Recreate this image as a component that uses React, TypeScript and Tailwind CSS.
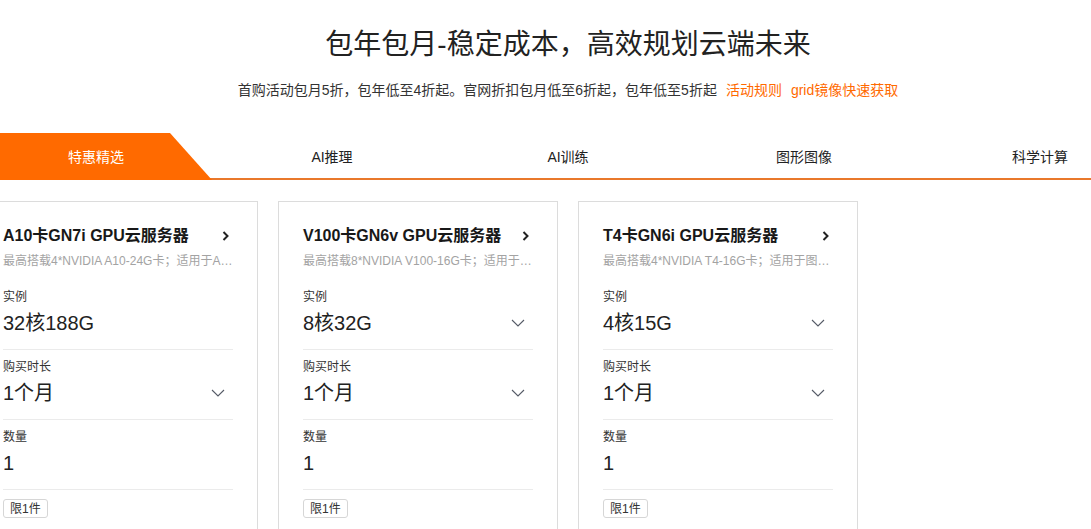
const font = { fontFamily: '"Liberation Sans", Arial, "Noto Sans CJK SC", sans-serif' };

type Product = {
    title: string;
    desc: string;
    instance: string;
    instanceSelect: boolean;
};

const products: Product[] = [
    { title: 'A10卡GN7i GPU云服务器', desc: '最高搭载4*NVIDIA A10-24G卡；适用于AI推理、图形渲染等场景', instance: '32核188G', instanceSelect: false },
    { title: 'V100卡GN6v GPU云服务器', desc: '最高搭载8*NVIDIA V100-16G卡；适用于深度学习训练等场景', instance: '8核32G', instanceSelect: true },
    { title: 'T4卡GN6i GPU云服务器', desc: '最高搭载4*NVIDIA T4-16G卡；适用于图形渲染、AI推理等场景', instance: '4核15G', instanceSelect: true },
];

const tabs = ['特惠精选', 'AI推理', 'AI训练', '图形图像', '科学计算'];

function ChevronDown() {
    return (
        <svg width="14" height="8" viewBox="0 0 14 8" fill="none" className="mr-[8px] shrink-0">
            <path d="M1 1l6 6 6-6" stroke="#555a66" strokeWidth="1.1" />
        </svg>
    );
}

function ChevronRight() {
    return (
        <svg width="7" height="10" viewBox="0 0 7 10" fill="none" className="mr-[4px] shrink-0">
            <path d="M1.5 1l4 4-4 4" stroke="#222" strokeWidth="2" />
        </svg>
    );
}

function Field({ label, value, select }: { label: string; value: string; select: boolean }) {
    return (
        <div className="pt-2 pb-3 border-b border-[#ebebeb]">
            <div className="text-[12px] leading-[18px] text-[#333]">{label}</div>
            <div className="mt-[3px] h-7 flex items-center justify-between">
                <span className="text-[20px] leading-7 text-[#222]">{value}</span>
                {select && <ChevronDown />}
            </div>
        </div>
    );
}

function Card({ p }: { p: Product }) {
    return (
        <div className="w-[280px] h-[340px] shrink-0 border border-[#dcdcdc] bg-white pt-[22px] pl-[24px] pr-[24px]">
            <div className="h-6 flex items-center justify-between">
                <span className="text-[16px] font-bold text-[#181818]">{p.title}</span>
                <ChevronRight />
            </div>
            <div className="mt-1 text-[12px] leading-[18px] text-[#a3a3a3] truncate">{p.desc}</div>
            <div className="mt-[10px]">
                <Field label="实例" value={p.instance} select={p.instanceSelect} />
                <Field label="购买时长" value="1个月" select={true} />
                <Field label="数量" value="1" select={false} />
            </div>
            <div className="mt-[9px] inline-flex items-center h-[19px] px-[6px] border border-[#d6d6d6] rounded-[3px] text-[12px] text-[#333]">
                限1件
            </div>
        </div>
    );
}

export default function App() {
    return (
        <div className="bg-white w-full h-[529px] overflow-hidden" style={font}>
            <div className="w-[1180px] ml-[-22px]">
                <div className="pt-[25px] text-center">
                    <h1 className="text-[28px] leading-10 text-[#222]">包年包月-稳定成本，高效规划云端未来</h1>
                    <p className="mt-[15px] text-[14px] leading-5 text-[#333]">
                        首购活动包月5折，包年低至4折起。官网折扣包月低至6折起，包年低至5折起
                        <a className="ml-[9px] text-[#ff6a00]">活动规则</a>
                        <a className="ml-[9px] text-[#ff6a00]">grid镜像快速获取</a>
                    </p>
                </div>

                <div className="mt-[33px] flex border-b-2 border-[#e9782b]">
                    {tabs.map((t, i) => (
                        <div key={t} className="relative w-[236px] h-[45px] pt-[3px] flex items-center justify-center">
                            {i === 0 && (
                                <div className="absolute left-0 top-0 w-[236px] h-[47px] bg-[#ff6a00] [clip-path:polygon(0_0,192px_0,234px_100%,0_100%)]" />
                            )}
                            <span className={`relative text-[14px] ${i === 0 ? 'text-white' : 'text-[#222]'}`}>{t}</span>
                        </div>
                    ))}
                </div>

                <div className="mt-[21px] flex gap-5">
                    {products.map((p) => (
                        <Card key={p.title} p={p} />
                    ))}
                </div>
            </div>
        </div>
    );
}
